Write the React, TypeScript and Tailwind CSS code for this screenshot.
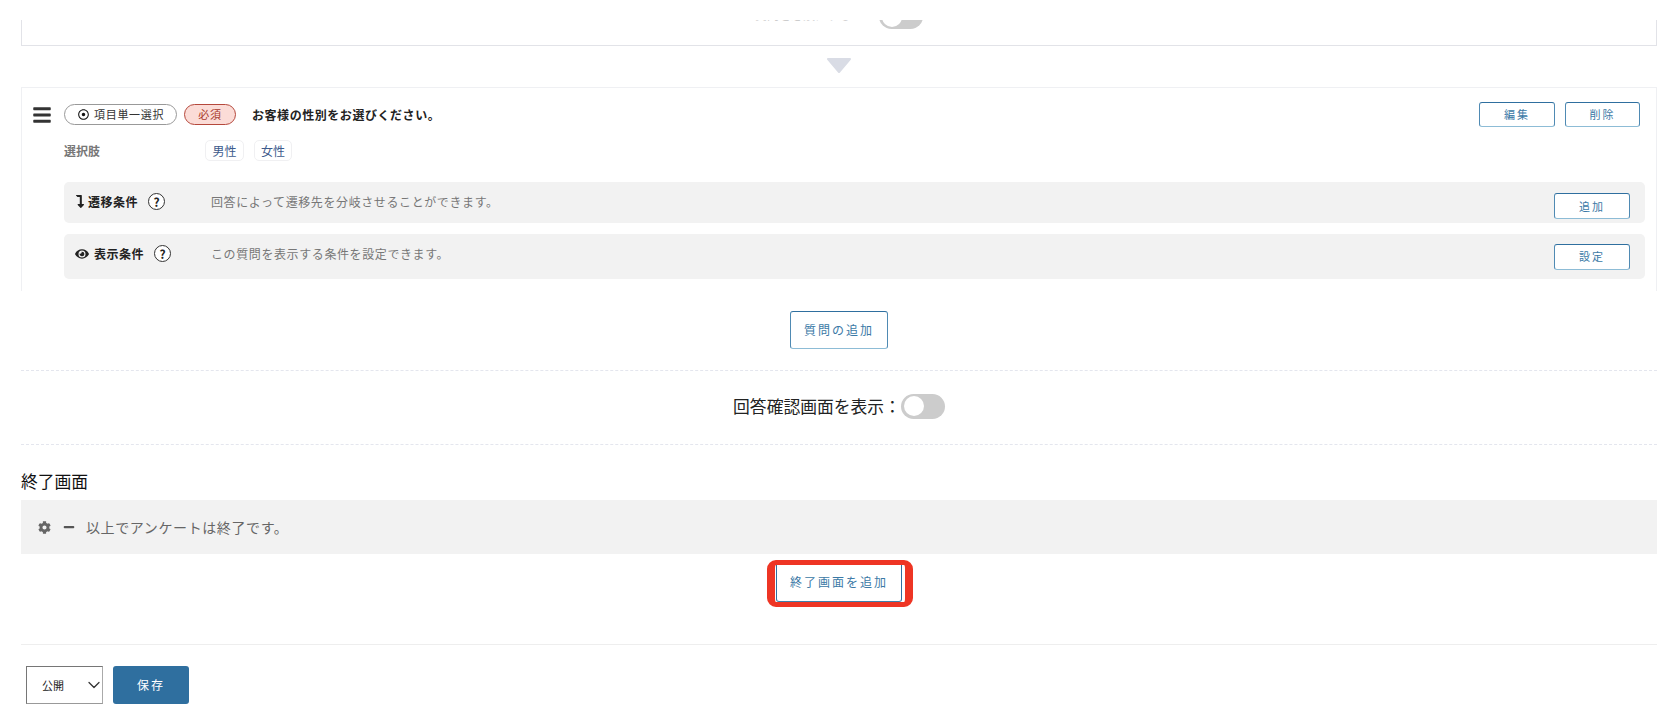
import { FaBars, FaCog, FaEye, FaLevelDownAlt, FaMinus, FaRegDotCircle } from "react-icons/fa";
import { ChevronDown } from "lucide-react";
import type { ReactNode } from "react";

const font = "font-['Noto_Sans_CJK_JP','Noto_Sans',sans-serif]";

function OutlineButton({ label, className }: { label: string; className: string }) {
  return (
    <button className={`flex items-center justify-center rounded-[3px] border border-[#4f8ab3] border-t-[#2f6f9f] border-b-[#8dbcd6] bg-white text-[#3b79a6] ${className}`}>
      {label}
    </button>
  );
}

function Toggle() {
  return (
    <span className="flex h-[25px] w-[44px] shrink-0 items-center rounded-full bg-[#cccccc] pl-[3px]">
      <span className="h-[20px] w-[20px] rounded-full bg-white" />
    </span>
  );
}

function Help() {
  return (
    <span className="flex h-[17px] w-[17px] items-center justify-center rounded-full border border-[#333] bg-white text-[12px] font-bold leading-none text-[#222]">
      ?
    </span>
  );
}

function ConditionRow({ icon, label, desc, action, className, textClass, buttonClass }: { icon: ReactNode; label: string; desc: string; action: string; className: string; textClass: string; buttonClass: string }) {
  return (
    <div className={`flex items-center rounded-[5px] bg-[#f2f2f2] pl-[11px] pr-[15px] ${className}`}>
      <div className={`flex w-[136px] items-center ${textClass}`}>
        {icon}
        <span className="mr-[10px] text-[12px] font-bold tracking-[0.5px] text-[#222]">{label}</span>
        <Help />
      </div>
      <span className={`flex-1 text-[12px] tracking-[0.6px] text-[#777] ${textClass}`}>{desc}</span>
      <OutlineButton label={action} className={`h-[26px] w-[76px] text-[11px] tracking-[2px] ${buttonClass}`} />
    </div>
  );
}

export default function App() {
  return (
    <div className={`${font} h-[728px] overflow-hidden bg-white px-[21px] pt-[20px]`}>
      <div className="flex h-[26px] justify-center gap-[10px] overflow-hidden border-x border-b border-[#e2e3e8]">
        <span className="mt-[-15px] w-[114px] overflow-hidden whitespace-nowrap text-[12px] leading-[20px] text-[#ccc]">質問を必須にする：</span>
        <span className="mt-[-16px]">
          <Toggle />
        </span>
      </div>

      <div className="flex justify-center pt-[12px] pb-[14px]">
        <svg width="26" height="15" viewBox="0 0 26 15">
          <path d="M2 1h22l-11 13z" fill="#d9dce5" stroke="#d9dce5" strokeWidth="2" strokeLinejoin="round" />
        </svg>
      </div>

      <div className="h-[204px] border-x border-t border-[#eff0f3] pl-[10px] pt-[14px]">
        <div className="flex h-[25px] items-center pr-[16px]">
          <FaBars className="h-[20px] w-[20px] text-[#333]" />
          <span className="ml-[12px] flex h-[21px] w-[113px] items-center rounded-full border border-[#999] pl-[13px] text-[11px] tracking-[0.7px] text-[#333]">
            <FaRegDotCircle className="mr-[5px] h-[11px] w-[11px] text-[#111]" />
            項目単一選択
          </span>
          <span className="ml-[7px] flex h-[21px] w-[52px] items-center justify-center rounded-full border border-[#b5483c] bg-[#fbdcd7] text-[11px] tracking-[0.7px] text-[#a8382c]">
            必須
          </span>
          <span className="ml-[16px] flex-1 text-[12px] font-bold tracking-[0.55px] text-[#222]">お客様の性別をお選びください。</span>
          <OutlineButton label="編集" className="h-[25px] w-[76px] text-[11px] tracking-[2px]" />
          <OutlineButton label="削除" className="ml-[10px] h-[25px] w-[75px] text-[11px] tracking-[2px]" />
        </div>

        <div className="ml-[32px] mr-[11px]">
          <div className="mt-[13px] flex h-[21px] items-center">
            <span className="w-[141px] text-[12px] font-bold text-[#777]">選択肢</span>
            <span className="flex h-[21px] w-[39px] items-center justify-center rounded-[5px] border border-[#f0f0f2] text-[12px] text-[#3d5a8c]">男性</span>
            <span className="ml-[10px] flex h-[21px] w-[38px] items-center justify-center rounded-[5px] border border-[#f0f0f2] text-[12px] text-[#3d5a8c]">女性</span>
          </div>
          <ConditionRow
            className="mt-[21px] h-[41px]"
            textClass="pb-[2px]"
            buttonClass="mt-[7px]"
            icon={<FaLevelDownAlt className="mr-[3px] h-[13px] w-[10px] text-[#222]" />}
            label="遷移条件"
            desc="回答によって遷移先を分岐させることができます。"
            action="追加"
          />
          <ConditionRow
            className="mt-[11px] h-[45px]"
            textClass="pb-[6px]"
            buttonClass=""
            icon={<FaEye className="mr-[5px] h-[14px] w-[14px] text-[#222]" />}
            label="表示条件"
            desc="この質問を表示する条件を設定できます。"
            action="設定"
          />
        </div>
      </div>

      <div className="flex justify-center pt-[20px]">
        <OutlineButton label="質問の追加" className="h-[38px] w-[98px] text-[12px] tracking-[2px]" />
      </div>

      <div className="mt-[21px] flex h-[75px] items-center justify-center border-y border-dashed border-[#e4e6ee] pb-[3px]">
        <span className="text-[16.8px] leading-none text-[#222]">回答確認画面を表示：</span>
        <Toggle />
      </div>

      <h2 className="mt-[24px] text-[16.8px] font-normal leading-[24px] text-[#111]">終了画面</h2>
      <div className="mt-[7px] flex h-[54px] items-center bg-[#f2f2f2] pl-[17px] text-[14px] tracking-[0.6px] text-[#666]">
        <FaCog className="h-[13px] w-[13px] text-[#666]" />
        <FaMinus className="ml-[12px] h-[12px] w-[12px] text-[#555]" />
        <span className="ml-[11px]">以上でアンケートは終了です。</span>
      </div>

      <div className="mt-[8px] flex justify-center">
        <div className="relative">
          <OutlineButton label="終了画面を追加" className="h-[40px] w-[126px] border-b-[#3f7fa9]! border-l-[#2f6f9f]! border-r-[#2f6f9f]! text-[12px] tracking-[2px]" />
          <span className="absolute -left-[9px] -right-[11px] -top-[2px] -bottom-[5px] rounded-[9px] border-x-[8px] border-y-[5px] border-[#ee3524]" />
        </div>
      </div>

      <div className="mt-[42px] flex h-[60px] items-end gap-[10px] border-t border-[#eeeeee] pl-[5px]">
        <div className="flex h-[38px] w-[77px] items-center justify-between border border-[#767676] border-b-[#999] border-r-[#aaa] pl-[15px] text-[11px] text-[#222]">
          公開
          <ChevronDown className="mr-[-2px] h-[20px] w-[20px] text-[#333]" strokeWidth={1.5} />
        </div>
        <button className="flex h-[38px] w-[76px] items-center justify-center rounded-[3px] bg-[#2f6f9f] text-[12px] tracking-[2px] text-white">
          保存
        </button>
      </div>
    </div>
  );
}
